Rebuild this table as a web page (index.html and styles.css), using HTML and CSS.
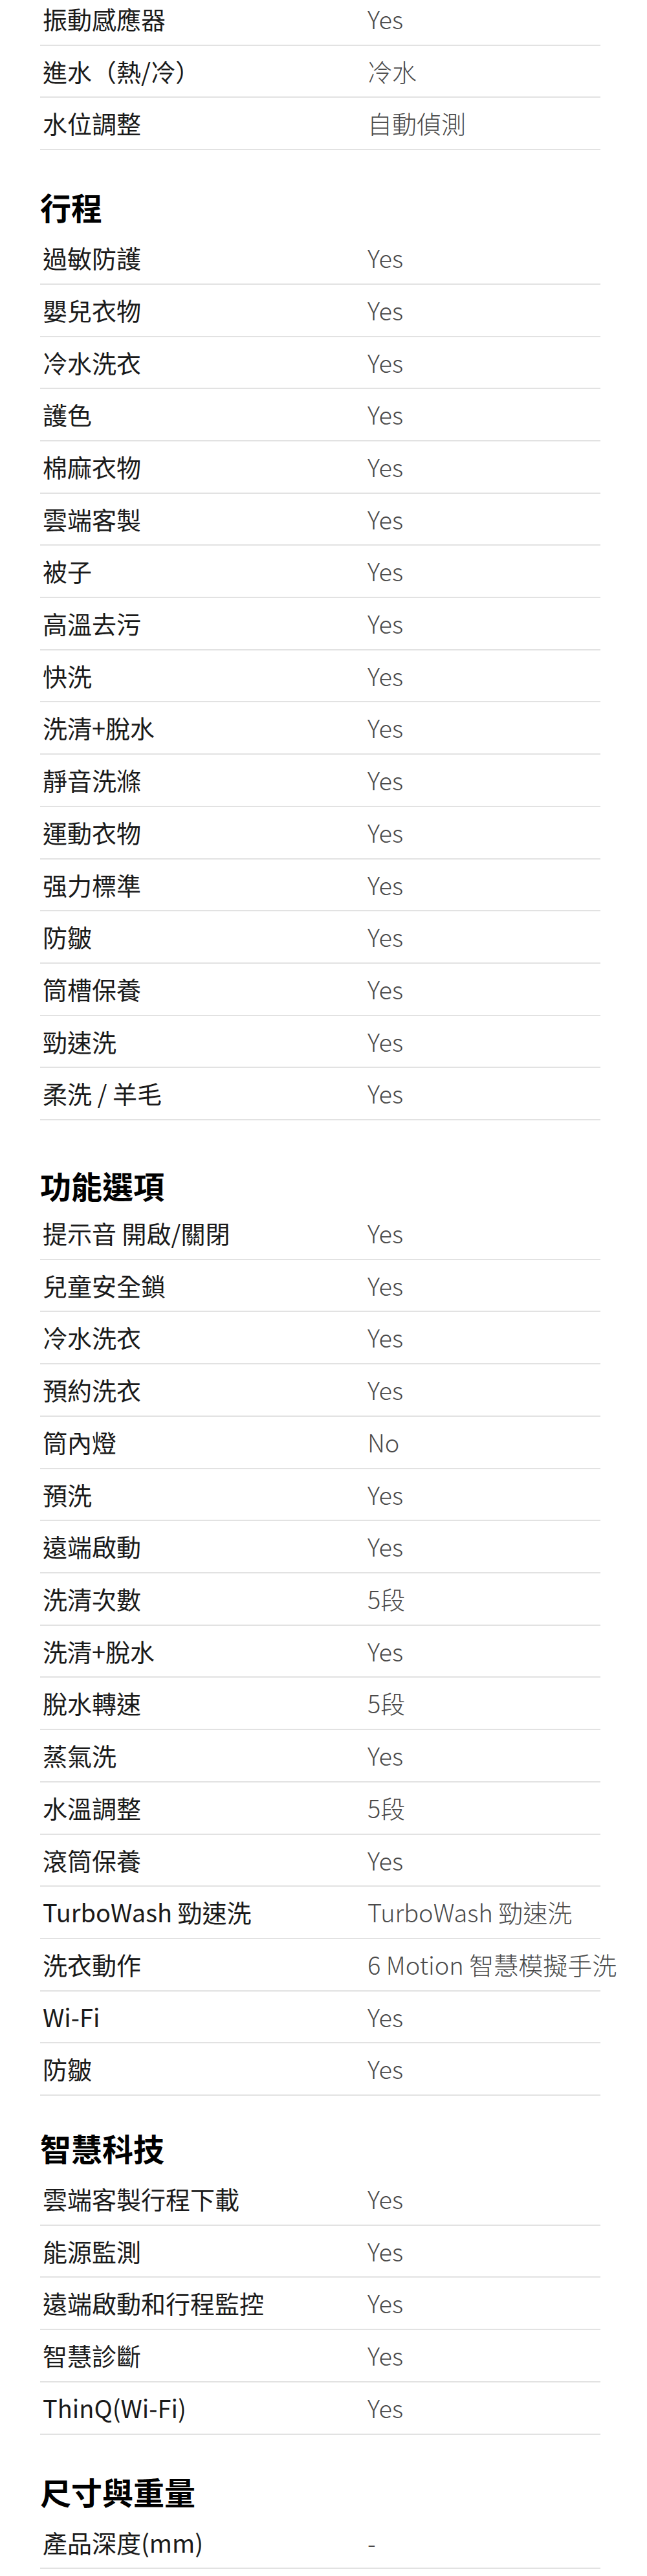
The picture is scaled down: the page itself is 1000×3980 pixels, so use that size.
FILE: index.html
```html
<!DOCTYPE html>
<html lang="zh-Hant">
<head>
	<meta charset="utf-8">
	<title>規格</title>
	<link rel="stylesheet" href="styles.css">
</head>
<body>
	<div class="spec-list">

		<div class="spec-group spec-group-first">
			<div class="spec-row"><div class="spec-name">振動感應器</div><div class="spec-value">Yes</div></div>
			<div class="spec-row"><div class="spec-name">進水（熱/冷）</div><div class="spec-value">冷水</div></div>
			<div class="spec-row"><div class="spec-name">水位調整</div><div class="spec-value">自動偵測</div></div>
		</div>

		<div class="spec-group">
			<h2 class="spec-title">行程</h2>
			<div class="spec-row"><div class="spec-name">過敏防護</div><div class="spec-value">Yes</div></div>
			<div class="spec-row"><div class="spec-name">嬰兒衣物</div><div class="spec-value">Yes</div></div>
			<div class="spec-row"><div class="spec-name">冷水洗衣</div><div class="spec-value">Yes</div></div>
			<div class="spec-row"><div class="spec-name">護色</div><div class="spec-value">Yes</div></div>
			<div class="spec-row"><div class="spec-name">棉麻衣物</div><div class="spec-value">Yes</div></div>
			<div class="spec-row"><div class="spec-name">雲端客製</div><div class="spec-value">Yes</div></div>
			<div class="spec-row"><div class="spec-name">被子</div><div class="spec-value">Yes</div></div>
			<div class="spec-row"><div class="spec-name">高溫去污</div><div class="spec-value">Yes</div></div>
			<div class="spec-row"><div class="spec-name">快洗</div><div class="spec-value">Yes</div></div>
			<div class="spec-row"><div class="spec-name">洗清+脫水</div><div class="spec-value">Yes</div></div>
			<div class="spec-row"><div class="spec-name">靜音洗滌</div><div class="spec-value">Yes</div></div>
			<div class="spec-row"><div class="spec-name">運動衣物</div><div class="spec-value">Yes</div></div>
			<div class="spec-row"><div class="spec-name">强力標準</div><div class="spec-value">Yes</div></div>
			<div class="spec-row"><div class="spec-name">防皺</div><div class="spec-value">Yes</div></div>
			<div class="spec-row"><div class="spec-name">筒槽保養</div><div class="spec-value">Yes</div></div>
			<div class="spec-row"><div class="spec-name">勁速洗</div><div class="spec-value">Yes</div></div>
			<div class="spec-row"><div class="spec-name">柔洗 / 羊毛</div><div class="spec-value">Yes</div></div>
		</div>

		<div class="spec-group spec-group-options">
			<h2 class="spec-title">功能選項</h2>
			<div class="spec-row"><div class="spec-name">提示音 開啟/關閉</div><div class="spec-value">Yes</div></div>
			<div class="spec-row"><div class="spec-name">兒童安全鎖</div><div class="spec-value">Yes</div></div>
			<div class="spec-row"><div class="spec-name">冷水洗衣</div><div class="spec-value">Yes</div></div>
			<div class="spec-row"><div class="spec-name">預約洗衣</div><div class="spec-value">Yes</div></div>
			<div class="spec-row"><div class="spec-name">筒內燈</div><div class="spec-value">No</div></div>
			<div class="spec-row"><div class="spec-name">預洗</div><div class="spec-value">Yes</div></div>
			<div class="spec-row"><div class="spec-name">遠端啟動</div><div class="spec-value">Yes</div></div>
			<div class="spec-row"><div class="spec-name">洗清次數</div><div class="spec-value">5段</div></div>
			<div class="spec-row"><div class="spec-name">洗清+脫水</div><div class="spec-value">Yes</div></div>
			<div class="spec-row"><div class="spec-name">脫水轉速</div><div class="spec-value">5段</div></div>
			<div class="spec-row"><div class="spec-name">蒸氣洗</div><div class="spec-value">Yes</div></div>
			<div class="spec-row"><div class="spec-name">水溫調整</div><div class="spec-value">5段</div></div>
			<div class="spec-row"><div class="spec-name">滾筒保養</div><div class="spec-value">Yes</div></div>
			<div class="spec-row"><div class="spec-name">TurboWash 勁速洗</div><div class="spec-value">TurboWash 勁速洗</div></div>
			<div class="spec-row"><div class="spec-name">洗衣動作</div><div class="spec-value">6 Motion 智慧模擬手洗</div></div>
			<div class="spec-row"><div class="spec-name">Wi-Fi</div><div class="spec-value">Yes</div></div>
			<div class="spec-row"><div class="spec-name">防皺</div><div class="spec-value">Yes</div></div>
		</div>

		<div class="spec-group spec-group-smart">
			<h2 class="spec-title">智慧科技</h2>
			<div class="spec-row"><div class="spec-name">雲端客製行程下載</div><div class="spec-value">Yes</div></div>
			<div class="spec-row"><div class="spec-name">能源監測</div><div class="spec-value">Yes</div></div>
			<div class="spec-row"><div class="spec-name">遠端啟動和行程監控</div><div class="spec-value">Yes</div></div>
			<div class="spec-row"><div class="spec-name">智慧診斷</div><div class="spec-value">Yes</div></div>
			<div class="spec-row"><div class="spec-name">ThinQ(Wi-Fi)</div><div class="spec-value">Yes</div></div>
		</div>

		<div class="spec-group">
			<h2 class="spec-title">尺寸與重量</h2>
			<div class="spec-row"><div class="spec-name">產品深度(mm)</div><div class="spec-value">-</div></div>
		</div>

	</div>
</body>
</html>
```

FILE: styles.css
```css
html, body {
	margin: 0;
	padding: 0;
	background: #fff;
}
body {
	font-family: "Noto Sans CJK TC", "Noto Sans", sans-serif;
	color: #000;
	overflow: hidden;
}

.spec-list {
	padding: 0 72px 0 62px;
}

.spec-group-first {
	margin-top: -10px;
}

.spec-title {
	margin: 52px 0 5px;
	font-size: 48px;
	font-weight: 700;
	line-height: 70px;
}
.spec-group-options .spec-title {
	margin: 65px 0 0;
}
.spec-group-smart .spec-title {
	margin-top: 45px;
}

.spec-row {
	display: grid;
	grid-template-columns: 502px 1fr;
	padding: 12px 4px;
	border-bottom: 2px solid #e2e2e2;
	font-size: 38px;
	line-height: 54.7px;
}
.spec-name {
	color: #1a1a1a;
}
.spec-value {
	font-weight: 300;
	color: #4a4a4a;
	white-space: nowrap;
}
```
